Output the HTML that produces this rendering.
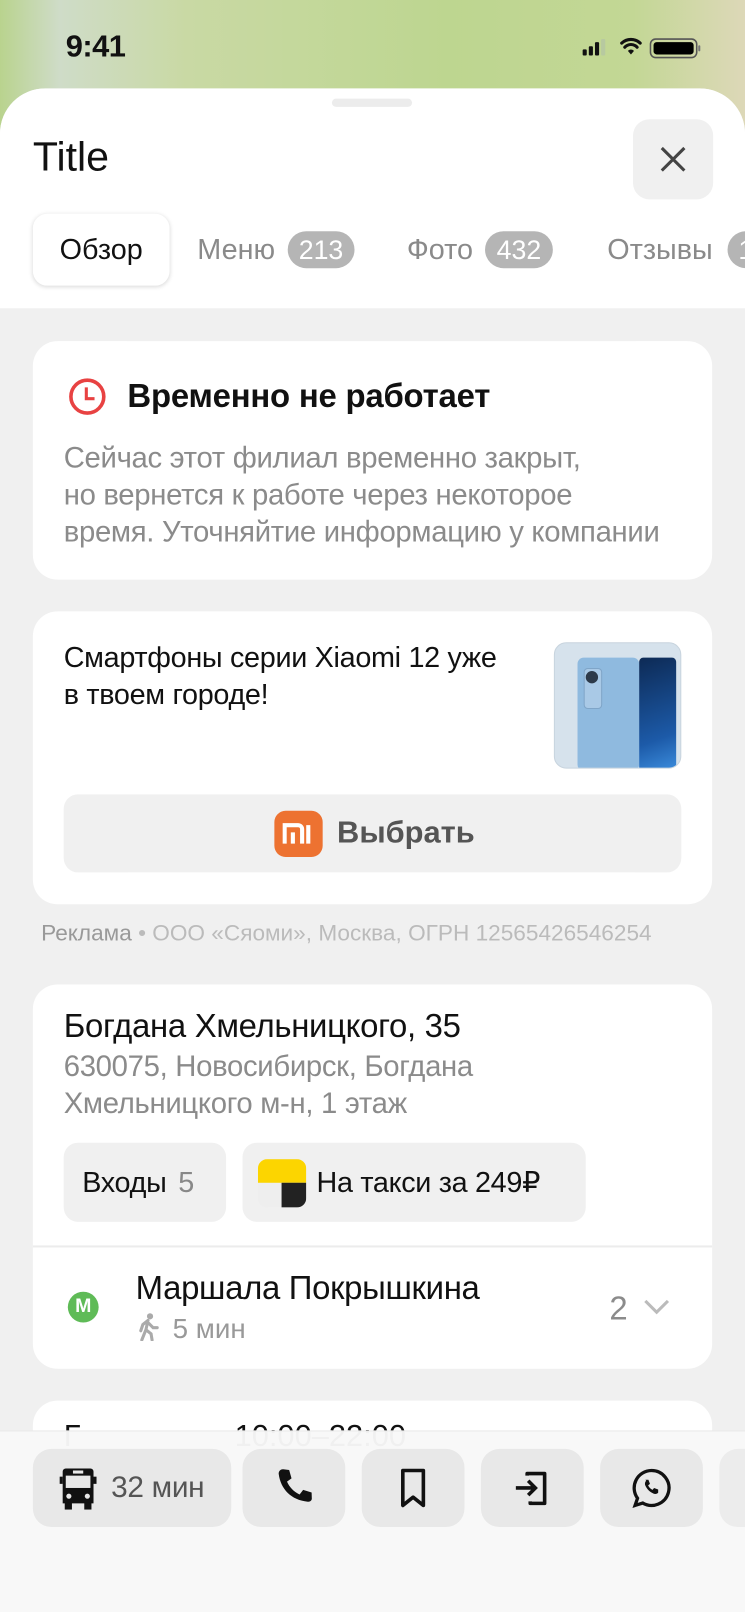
<!DOCTYPE html>
<html><head><meta charset="utf-8"><style>
*{margin:0;padding:0;box-sizing:border-box}
html,body{width:745px;height:1612px;overflow:hidden}
body{font-family:"Liberation Sans","DejaVu Sans",sans-serif;background:#f0f0f0}
#w{position:absolute;left:0;top:0;width:725px;height:1569px;transform:scale(1.0276);transform-origin:0 0;overflow:hidden;background:linear-gradient(90deg,#b9d38e 0%,#cfdcc8 8%,#c9d9a4 25%,#bdd690 60%,#c3d795 85%,#ddd8b8 100%)}
.abs{position:absolute}
.sheet{position:absolute;left:0;top:86px;width:725px;height:1483px;background:#f0f0f0;border-radius:44px 44px 0 0;overflow:hidden}
.head{position:absolute;left:0;top:0;width:725px;height:214px;background:#fff}
.card{position:absolute;left:32px;width:661px;background:#fff;border-radius:24px}
.nw{white-space:nowrap}
.badge{display:inline-block;background:#b5b5b5;color:#fff;border-radius:18px;padding:0 11px;height:36px;line-height:36px;font-size:26px;margin-left:12px;vertical-align:top}
.tab{position:absolute;font-size:28px;color:#8a8a8a;line-height:36px}
.btn{position:absolute;top:1410px;height:76px;background:#e8e8e8;border-radius:18px;display:flex;align-items:center;justify-content:center}
</style></head><body><div id="w">
<div class="abs nw" style="left:64px;top:28px;font-size:30px;line-height:36px;font-weight:bold;color:#111;letter-spacing:-0.5px">9:41</div>
<svg class="abs" style="left:564px;top:36px" width="120" height="22" viewBox="0 0 120 22">
<rect x="3" y="12" width="4" height="6" rx="1" fill="#111"/><rect x="9" y="9" width="4" height="9" rx="1" fill="#111"/><rect x="15" y="5" width="4" height="13" rx="1" fill="#111"/><rect x="21" y="2" width="4" height="16" rx="1" fill="#b7c9a0"/>
<path d="M41 6a13 13 0 0 1 18 0M44 10a8 8 0 0 1 12 0" stroke="#111" stroke-width="3" fill="none" stroke-linecap="round"/><path d="M47 13.5a4 4 0 0 1 6 0L50 17z" fill="#111"/>
<rect x="69" y="2" width="45" height="18" rx="5" fill="none" stroke="#555" stroke-width="1.5"/><rect x="72" y="5" width="39" height="12" rx="3" fill="#000"/><rect x="115.5" y="8" width="2" height="6" rx="1" fill="#777"/>
</svg>
<div class="sheet">
 <div class="head">
  <div class="abs" style="left:323px;top:10px;width:78px;height:8px;border-radius:4px;background:#ececec"></div>
  <div class="abs" style="left:32px;top:42px;font-size:40px;line-height:50px;color:#111">Title</div>
  <div class="abs" style="left:616px;top:30px;width:78px;height:78px;border-radius:16px;background:#f0f0f0"></div>
  <svg class="abs" style="left:642px;top:56px" width="26" height="26"><path d="M2 2L24 24M24 2L2 24" stroke="#444" stroke-width="3"/></svg>
  <div class="abs" style="left:32px;top:122px;width:133px;height:70px;border-radius:14px;background:#fff;box-shadow:0 1px 4px rgba(0,0,0,.15);font-size:28px;color:#111;text-align:center;line-height:70px">Обзор</div>
  <div class="tab nw" style="left:192px;top:139px">Меню<span class="badge">213</span></div>
  <div class="tab nw" style="left:396px;top:139px">Фото<span class="badge">432</span></div>
  <div class="tab nw" style="left:591px;top:139px">Отзывы<span class="badge" style="margin-left:14px">1</span></div>
 </div>
 <div class="card" style="top:246px;height:232px">
  <svg class="abs" style="left:34px;top:35px" width="38" height="38"><circle cx="19" cy="19" r="16" fill="none" stroke="#e84242" stroke-width="3.5"/><path d="M18 10v11h8" stroke="#e84242" stroke-width="3" fill="none"/></svg>
  <div class="abs nw" style="left:92px;top:33px;font-size:32px;line-height:40px;font-weight:bold;color:#111;letter-spacing:-0.2px">Временно не работает</div>
  <div class="abs nw" style="left:30px;top:96px;font-size:28.5px;line-height:36px;color:#8b8b8b;letter-spacing:-0.3px">Сейчас этот филиал временно закрыт,<br>но вернется к работе через некоторое<br>время. Уточняйтие информацию у компании</div>
 </div>
 <div class="card" style="top:509px;height:285px">
  <div class="abs nw" style="left:30px;top:27px;font-size:28px;line-height:36px;color:#111;letter-spacing:-0.3px">Смартфоны серии Xiaomi 12 уже<br>в твоем городе!</div>
  <div class="abs" style="left:507px;top:30px;width:124px;height:123px;border-radius:12px;background:#d6e2ec;border:1px solid #c8d4de;overflow:hidden">
   <div class="abs" style="left:22px;top:14px;width:60px;height:110px;border-radius:6px;background:#8fbadf"></div>
   <div class="abs" style="left:28px;top:24px;width:18px;height:40px;border-radius:4px;background:#a9c9e6;border:1px solid #7fa5c8"></div>
   <div class="abs" style="left:30px;top:27px;width:12px;height:12px;border-radius:50%;background:#2d3a4a"></div>
   <div class="abs" style="left:82px;top:14px;width:36px;height:110px;border-radius:4px;background:linear-gradient(160deg,#0d2a55,#1c5aa8 70%,#3c8ddd)"></div>
  </div>
  <div class="abs" style="left:30px;top:178px;width:601px;height:76px;border-radius:14px;background:#f0f0f0"></div>
  <div class="abs" style="left:235px;top:194px;width:47px;height:45px;border-radius:11px;background:#ed7231"></div>
  <svg class="abs" style="left:243px;top:204px" width="32" height="26"><path d="M2 22V4h13a4 4 0 0 1 4 4v14M10 22V11M25 4v18" stroke="#fff" stroke-width="4" fill="none"/></svg>
  <div class="abs nw" style="left:296px;top:196px;font-size:30px;line-height:40px;font-weight:bold;color:#555">Выбрать</div>
 </div>
 <div class="abs nw" style="left:40px;top:809px;font-size:22px;line-height:26px;color:#999">Реклама <span style="color:#bbb">• ООО «Сяоми», Москва, ОГРН 12565426546254</span></div>
 <div class="card" style="top:872px;height:374px">
  <div class="abs nw" style="left:30px;top:20px;font-size:32px;line-height:40px;color:#111;letter-spacing:-0.3px">Богдана Хмельницкого, 35</div>
  <div class="abs nw" style="left:30px;top:62px;font-size:28.5px;line-height:36px;color:#8b8b8b;letter-spacing:-0.3px">630075, Новосибирск, Богдана<br>Хмельницкого м-н, 1 этаж</div>
  <div class="abs nw" style="left:30px;top:154px;width:158px;height:77px;border-radius:14px;background:#f0f0f0;font-size:28px;line-height:77px;padding-left:18px;color:#111;letter-spacing:-0.3px">Входы <span style="color:#888;margin-left:4px">5</span></div>
  <div class="abs nw" style="left:204px;top:154px;width:334px;height:77px;border-radius:14px;background:#f0f0f0;font-size:28px;line-height:77px;padding-left:72px;color:#111;letter-spacing:-0.3px">На такси за 249₽</div>
  <div class="abs" style="left:219px;top:170px;width:47px;height:47px;border-radius:9px;overflow:hidden;background:#eee">
   <div style="height:23px;background:#fcd500"></div><div class="abs" style="left:23px;top:23px;width:24px;height:24px;background:#222"></div>
  </div>
  <div class="abs" style="left:0;top:254px;width:661px;height:2px;background:#ececec"></div>
  <div class="abs" style="left:34px;top:299px;width:30px;height:30px;border-radius:50%;background:#5fbb57;color:#fff;font-weight:bold;font-size:19px;text-align:center;line-height:30px">М</div>
  <div class="abs nw" style="left:100px;top:275px;font-size:32px;line-height:40px;color:#111;letter-spacing:-0.3px">Маршала Покрышкина</div>
  <div class="abs nw" style="left:100px;top:319px;font-size:27px;line-height:30px;color:#999"><svg width="24" height="28" viewBox="0 0 24 28" style="vertical-align:-3px;margin-right:12px"><circle cx="14" cy="4" r="3" fill="#aaa"/><path d="M12 8l-5 4-2 6M12 8l-2 9 5 4 1 6M10 17l-4 10M13 11l4 4 4 0" stroke="#aaa" stroke-width="3" fill="none" stroke-linecap="round"/></svg>5 мин</div>
  <div class="abs nw" style="left:561px;top:295px;font-size:32px;line-height:40px;color:#8b8b8b">2</div>
  <svg class="abs" style="left:594px;top:306px" width="26" height="16"><path d="M2 2l11 11 11-11" stroke="#bbb" stroke-width="3" fill="none"/></svg>
 </div>
 <div class="card" style="top:1277px;height:200px">
  <div class="abs nw" style="left:30px;top:18px;font-size:30px;color:#111">Г&nbsp;&nbsp;&nbsp;&nbsp;&nbsp;&nbsp;&nbsp;&nbsp;&nbsp;&nbsp;&nbsp;&nbsp;&nbsp;&nbsp;&nbsp;&nbsp;&nbsp;&nbsp;10:00–22:00</div>
 </div>
</div>
<div class="abs" style="left:0;top:1392px;width:725px;height:177px;background:rgba(248,248,248,.97);border-top:1px solid #e8e8e8"></div>
<div class="btn" style="left:32px;width:193px"><svg width="36" height="46" viewBox="0 0 36 46"><path d="M6 4h24a3 3 0 0 1 3 3v31H3V7a3 3 0 0 1 3-3z" fill="#111"/><rect x="6" y="11" width="24" height="12" fill="#e8e8e8"/><rect x="13" y="6" width="10" height="3" fill="#e8e8e8"/><circle cx="9" cy="31" r="2.5" fill="#e8e8e8"/><circle cx="27" cy="31" r="2.5" fill="#e8e8e8"/><rect x="5" y="37" width="7" height="7" fill="#111"/><rect x="24" y="37" width="7" height="7" fill="#111"/><rect x="0" y="12" width="3" height="7" fill="#111"/><rect x="33" y="12" width="3" height="7" fill="#111"/></svg><span style="font-size:29px;color:#555;margin-left:14px;letter-spacing:-0.3px">32 мин</span></div>
<div class="btn" style="left:236px;width:100px"><svg width="46" height="46" viewBox="0 0 24 24"><path d="M6.6 2.5l3 .4 1.2 4.2-2.3 1.7c1.2 2.8 3.5 5.2 6.4 6.5l1.8-2.3 4.3 1.3.1 3.2c-.1 1-.9 1.6-2 1.5C10.5 18.2 5.3 12.5 4.3 5c-.2-1.3.8-2.6 2.3-2.5z" fill="#111"/></svg></div>
<div class="btn" style="left:352px;width:100px"><svg width="30" height="40" viewBox="0 0 30 40"><path d="M5 3h20v34l-10-8-10 8z" fill="none" stroke="#111" stroke-width="3.5" stroke-linejoin="round"/></svg></div>
<div class="btn" style="left:468px;width:100px"><svg width="40" height="40" viewBox="0 0 40 40"><path d="M15 8V6h17v29H18v-2" fill="none" stroke="#111" stroke-width="3.5" stroke-linejoin="round"/><path d="M4 20h19M16 13l7 7-7 7" fill="none" stroke="#111" stroke-width="3.5"/></svg></div>
<div class="btn" style="left:584px;width:100px"><svg width="42" height="42" viewBox="0 0 42 42"><path d="M21 4a17 17 0 1 1-8.5 31.7L5 38l2.4-7A17 17 0 0 1 21 4z" fill="none" stroke="#111" stroke-width="3.2"/><path d="M15 13l3 0 1.5 4-1.8 1.5c.9 2 2.3 3.4 4.3 4.3l1.5-1.8 4 1.5v3c-1 1.3-2.8 1.7-4.5 1-3.7-1.5-6.600-4.400-8.100-8.100-.6-1.700-.1-3.500 1-4.400z" fill="#111"/></svg></div>
<div class="btn" style="left:700px;width:100px;background:#ececec"></div>
</div></body></html>
